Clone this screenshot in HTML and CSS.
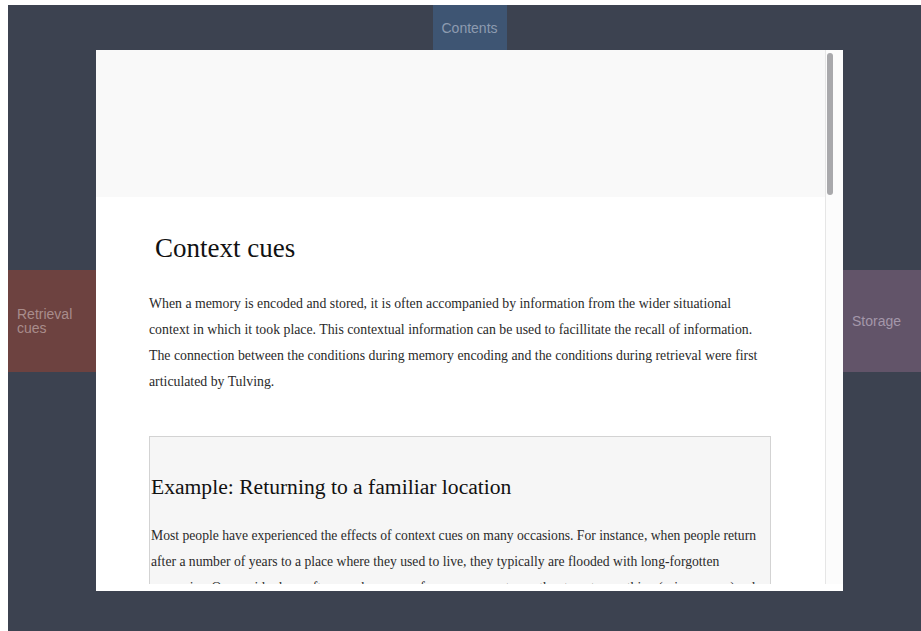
FILE: index.html
```html
<!DOCTYPE html>
<html lang="en">
<head>
<meta charset="utf-8">
<title>Context cues</title>
<link rel="stylesheet" href="styles.css">
</head>
<body>
<div class="stage">
  <a class="tab tab-top" href="#">Contents</a>
  <a class="tab tab-left" href="#">Retrieval cues</a>

  <div class="modal">
    <div class="pane">
      <div class="banner"></div>
      <article class="article">
        <h1 class="title">Context cues</h1>
        <p class="text">When a memory is encoded and stored, it is often accompanied by information from the wider situational context in which it took place. This contextual information can be used to facillitate the recall of information. The connection between the conditions during memory encoding and the conditions during retrieval were first articulated by Tulving.</p>
        <section class="example">
          <h2 class="example-title">Example: Returning to a familiar location</h2>
          <p class="text">Most people have experienced the effects of context cues on many occasions. For instance, when people return after a number of years to a place where they used to live, they typically are flooded with long-forgotten memories. Or consider how often you have gone from one room to another to get something (scissors, say) only to find that you cannot remember what you came for.</p>
        </section>
      </article>
    </div>
    <div class="scrollbar"><div class="thumb"></div></div>
  </div>

  <a class="tab tab-right" href="#">Storage</a>
</div>
</body>
</html>
```

FILE: styles.css
```css
html, body {
  height: 100%;
}

body {
  margin: 5px 0 0 8px;
  overflow: hidden;
  background: #ffffff;
}

.stage {
  display: grid;
  grid-template-columns: 88px 747px 78px;
  grid-template-rows: 45px 541px 1fr;
  height: calc(100% - 5px);
  background: #3c4250;
  font-family: "Liberation Sans", Arial, sans-serif;
}

.tab {
  display: flex;
  align-items: center;
  box-sizing: border-box;
  padding: 0 9px;
  font-size: 14px;
  line-height: 14px;
  text-decoration: none;
}

.tab-top {
  grid-column: 2;
  grid-row: 1;
  justify-self: center;
  width: 74px;
  background: #3e5573;
  color: #8d9bb0;
}

.tab-left {
  grid-column: 1;
  grid-row: 2;
  align-self: center;
  height: 102px;
  background: #6d4240;
  color: #a98d8c;
}

.tab-right {
  grid-column: 3;
  grid-row: 2;
  align-self: center;
  height: 102px;
  background: #625469;
  color: #a497aa;
}

.modal {
  grid-column: 2;
  grid-row: 2;
  display: flex;
  background: #ffffff;
  padding-bottom: 7px;
  min-height: 0;
}

.pane {
  flex: 1;
  overflow: hidden;
}

.banner {
  height: 147px;
  background: #f9f9f9;
}

.article {
  padding: 0 54px 0 53px;
  font-family: "Liberation Serif", "Times New Roman", serif;
}

.title {
  margin: 36px 0 0 6px;
  font-size: 27px;
  font-weight: normal;
  line-height: 31px;
  color: #111111;
}

.text {
  margin: 27px 0 0;
  font-size: 13.8px;
  line-height: 26px;
  color: #2a2a2a;
}

.example {
  margin-top: 41px;
  padding: 38px 4px 20px 1px;
  background: #f6f6f6;
  border: 1px solid #d3d3d3;
}

.example-title {
  margin: 0;
  font-size: 21.6px;
  font-weight: normal;
  line-height: 25px;
  color: #111111;
}

.example .text {
  margin-top: 23px;
  font-size: 13.65px;
}

.scrollbar {
  width: 17px;
  border-left: 1px solid #e6e6e6;
  background: #fcfcfc;
  padding-top: 3px;
}

.thumb {
  width: 6px;
  height: 142px;
  margin-left: 1px;
  border-radius: 3px;
  background: #a9a9ac;
}
```
